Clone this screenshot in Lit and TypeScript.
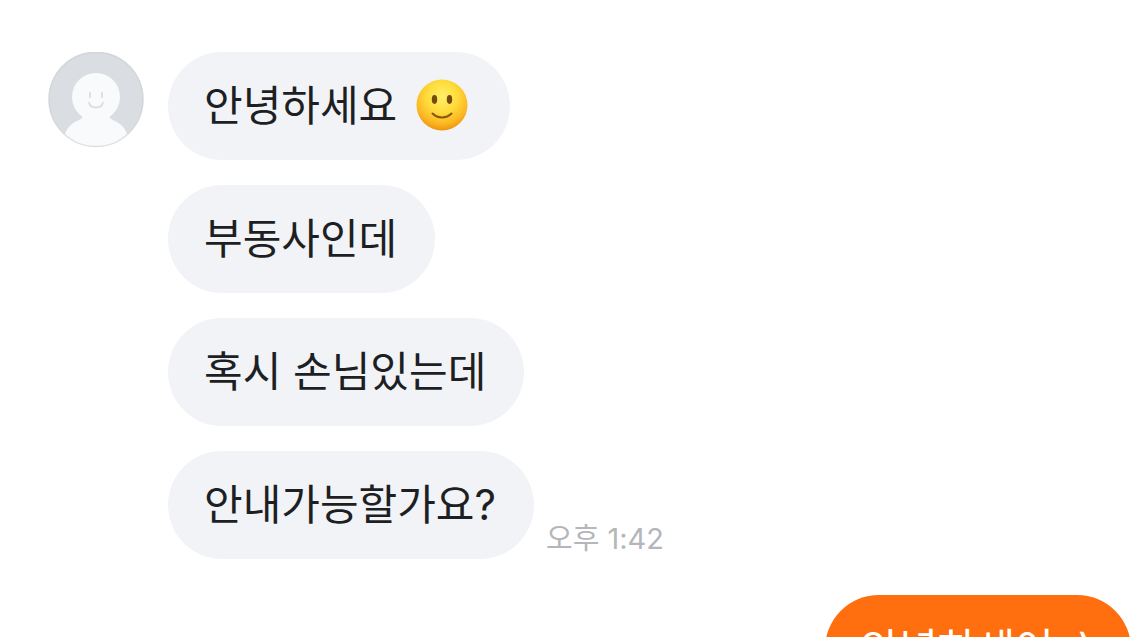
import { LitElement, html, css } from "lit";
import { customElement, property } from "lit/decorators.js";

const smile = html`<svg class="emoji" viewBox="0 0 52 52" role="img" aria-label="🙂">
  <defs>
    <radialGradient id="face" cx="50%" cy="34%" r="66%">
      <stop offset="0" stop-color="#ffef6a" />
      <stop offset="0.45" stop-color="#ffdc3c" />
      <stop offset="0.8" stop-color="#fcb722" />
      <stop offset="1" stop-color="#ee930f" />
    </radialGradient>
  </defs>
  <circle cx="26" cy="26" r="25.5" fill="url(#face)" />
  <ellipse cx="18.5" cy="20.5" rx="2.7" ry="4.4" fill="#754a0c" />
  <ellipse cx="33.5" cy="20.5" rx="2.7" ry="4.4" fill="#754a0c" />
  <path d="M16.5 34.5c5 5.2 14 5.2 19 0" fill="none" stroke="#8a560c" stroke-width="2" stroke-linecap="round" />
</svg>`;

@customElement("chat-avatar")
class ChatAvatar extends LitElement {
  static styles = css`
    :host { display: block; }
    .avatar { display: block; width: 96px; height: 96px; }
  `;
  render() {
    return html`<svg class="avatar" viewBox="0 0 96 96" aria-hidden="true">
      <defs><clipPath id="disc"><circle cx="48" cy="47" r="47.5" /></clipPath></defs>
      <g clip-path="url(#disc)">
        <rect width="96" height="96" fill="#dadee2" />
        <circle cx="48" cy="45" r="24" fill="#f8fafb" />
        <path d="M35 63C35 68 29 68 24 72C19 76 16 81 14 97H82C80 81 77 76 72 72C67 68 61 68 61 63Z" fill="#f8fafb" />
      </g>
      <circle cx="48" cy="47.5" r="47" fill="none" stroke="#cbcfd3" stroke-opacity="0.55" stroke-width="1.5" />
      <path d="M42 41v4M54 41v4M41 51c2 6 12 6 14 0" fill="none" stroke="#dcdfe1" stroke-width="2" stroke-linecap="round" />
    </svg>`;
  }
}

@customElement("chat-bubble")
class ChatBubble extends LitElement {
  @property({ type: Boolean, reflect: true }) own = false;
  static styles = css`
    :host {
      display: block;
      box-sizing: border-box;
      padding: 22px 38px 22px 36px;
      border-radius: 54px;
      background: #f1f3f7;
      color: #1d1f23;
      font-size: 42px;
      line-height: 64px;
      white-space: nowrap;
    }
    :host([own]) { background: #ff6f0f; color: #fff; }
  `;
  render() {
    return html`<slot></slot>`;
  }
}

@customElement("app-root")
class AppRoot extends LitElement {
  static styles = css`
    :host {
      display: block;
      height: 100vh;
      overflow: hidden;
      background: #fff;
      font-family: Inter, "Noto Sans CJK KR", sans-serif;
    }
    .chat { display: flex; flex-direction: column; gap: 36px; padding-top: 52px; }
    .incoming { display: flex; align-items: flex-start; gap: 24px; padding-left: 48px; }
    .messages { display: flex; flex-direction: column; align-items: flex-start; gap: 25px; }
    .row { display: flex; align-items: flex-end; gap: 12px; }
    .emoji { width: 52px; height: 52px; margin: 0 4px 0 7px; vertical-align: -10px; }
    .time { color: #b4b6ba; font-size: 29px; line-height: 40px; }
    .outgoing { display: flex; justify-content: flex-end; }
  `;
  render() {
    return html`<main class="chat">
      <section class="incoming">
        <chat-avatar></chat-avatar>
        <div class="messages">
          <chat-bubble>안녕하세요 ${smile}</chat-bubble>
          <chat-bubble>부동사인데</chat-bubble>
          <chat-bubble>혹시 손님있는데</chat-bubble>
          <div class="row">
            <chat-bubble>안내가능할가요?</chat-bubble>
            <time class="time" datetime="13:42">오후 1:42</time>
          </div>
        </div>
      </section>
      <section class="outgoing">
        <chat-bubble own>안녕하세여 :)</chat-bubble>
      </section>
    </main>`;
  }
}
